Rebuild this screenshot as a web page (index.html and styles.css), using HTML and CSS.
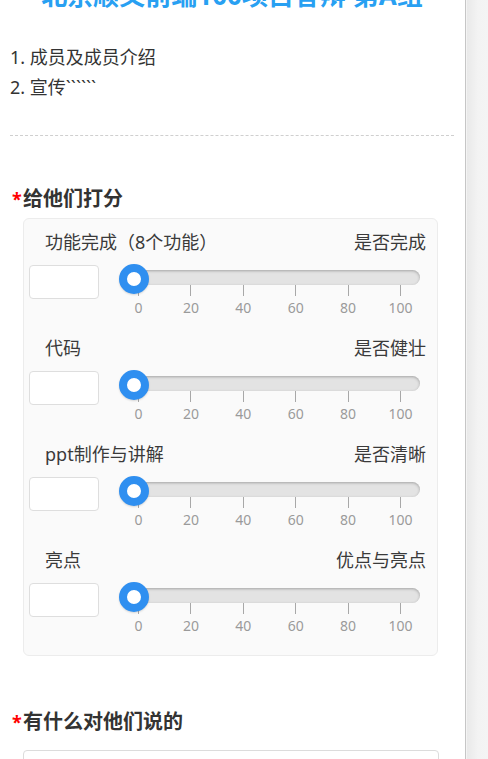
FILE: index.html
```html
<!DOCTYPE html>
<html lang="zh-CN">
<head>
<meta charset="utf-8">
<title>答辩打分</title>
<link rel="stylesheet" href="styles.css">
</head>
<body>
<div class="page">
  <h1 class="title">北京顺义前端100项目答辩 第A组</h1>
  <ol class="intro">
    <li>成员及成员介绍</li>
    <li>宣传``````</li>
  </ol>
  <div class="divider"></div>

  <h2 class="q-title"><span class="req">*</span>给他们打分</h2>
  <div class="rate-box">
    <div class="rate-row">
      <div class="rate-head"><span>功能完成（8个功能）</span><span>是否完成</span></div>
      <div class="rate-ctrl">
        <input class="score" type="text">
        <div class="slider">
          <div class="track"></div>
          <div class="handle"></div>
          <div class="scale">
            <div class="tick"><i></i><span>0</span></div>
            <div class="tick"><i></i><span>20</span></div>
            <div class="tick"><i></i><span>40</span></div>
            <div class="tick"><i></i><span>60</span></div>
            <div class="tick"><i></i><span>80</span></div>
            <div class="tick"><i></i><span>100</span></div>
          </div>
        </div>
      </div>
    </div>
    <div class="rate-row">
      <div class="rate-head"><span>代码</span><span>是否健壮</span></div>
      <div class="rate-ctrl">
        <input class="score" type="text">
        <div class="slider">
          <div class="track"></div>
          <div class="handle"></div>
          <div class="scale">
            <div class="tick"><i></i><span>0</span></div>
            <div class="tick"><i></i><span>20</span></div>
            <div class="tick"><i></i><span>40</span></div>
            <div class="tick"><i></i><span>60</span></div>
            <div class="tick"><i></i><span>80</span></div>
            <div class="tick"><i></i><span>100</span></div>
          </div>
        </div>
      </div>
    </div>
    <div class="rate-row">
      <div class="rate-head"><span>ppt制作与讲解</span><span>是否清晰</span></div>
      <div class="rate-ctrl">
        <input class="score" type="text">
        <div class="slider">
          <div class="track"></div>
          <div class="handle"></div>
          <div class="scale">
            <div class="tick"><i></i><span>0</span></div>
            <div class="tick"><i></i><span>20</span></div>
            <div class="tick"><i></i><span>40</span></div>
            <div class="tick"><i></i><span>60</span></div>
            <div class="tick"><i></i><span>80</span></div>
            <div class="tick"><i></i><span>100</span></div>
          </div>
        </div>
      </div>
    </div>
    <div class="rate-row">
      <div class="rate-head"><span>亮点</span><span>优点与亮点</span></div>
      <div class="rate-ctrl">
        <input class="score" type="text">
        <div class="slider">
          <div class="track"></div>
          <div class="handle"></div>
          <div class="scale">
            <div class="tick"><i></i><span>0</span></div>
            <div class="tick"><i></i><span>20</span></div>
            <div class="tick"><i></i><span>40</span></div>
            <div class="tick"><i></i><span>60</span></div>
            <div class="tick"><i></i><span>80</span></div>
            <div class="tick"><i></i><span>100</span></div>
          </div>
        </div>
      </div>
    </div>
  </div>

  <h2 class="q-title q-second"><span class="req">*</span>有什么对他们说的</h2>
  <textarea class="comment"></textarea>
</div>
</body>
</html>
```
FILE: styles.css
```css
html, body {
  margin: 0;
  padding: 0;
  overflow: hidden;
}
body {
  background: linear-gradient(to right, #ffffff 0, #ffffff 466px, #e9e9e9 467px, #f3f3f3 478px, #f4f4f4 100%);
  font-family: "Noto Sans", "Noto Sans CJK SC", sans-serif;
  color: #333;
}
.page {
  width: 444px;
  padding: 0 11px 40px 10px;
  background: #fff;
  border-right: 1px solid #c6c6c6;
  min-height: 100vh;
}
.title {
  margin: -23px 0 29px;
  font-size: 26px;
  line-height: 36px;
  font-weight: bold;
  color: #28a0f2;
  text-align: center;
}
.intro {
  margin: 0;
  padding: 0;
  list-style: decimal inside;
  font-size: 18px;
  line-height: 30px;
  color: #333;
}
.divider {
  margin-top: 33px;
  border-top: 1px dashed #cfcfcf;
}
.q-title {
  margin: 49px 0 0;
  padding-left: 2px;
  font-size: 20px;
  line-height: 28px;
  font-weight: bold;
  color: #333;
  display: flex;
  align-items: flex-start;
}
.q-second {
  margin-top: 52px;
}
.req {
  display: inline-block;
  width: 11px;
  padding-top: 2px;
  color: #f00;
  font-size: 18px;
  line-height: 24px;
  font-weight: bold;
}
.rate-box {
  margin: 5px 16px 0 13px;
  padding: 11px 11px 1px 5px;
  background: #fafafa;
  border: 1px solid #ececec;
  border-radius: 6px;
}
.rate-row {
  margin-bottom: 20px;
}
.rate-head {
  display: flex;
  justify-content: space-between;
  padding-left: 16px;
  font-size: 18px;
  line-height: 24px;
  color: #3a3a3a;
  margin-bottom: 11px;
}
.rate-ctrl {
  display: flex;
  align-items: flex-start;
}
.score {
  box-sizing: border-box;
  width: 70px;
  height: 34px;
  margin: 0;
  padding: 0 6px;
  background: #fff;
  border: 1px solid #dedede;
  border-radius: 4px;
  outline: none;
}
.slider {
  position: relative;
  width: 300px;
  margin-left: 21px;
  padding-top: 5px;
}
.track {
  height: 15px;
  border-radius: 8px;
  background: #e3e3e3;
  box-shadow: inset 0 1px 3px rgba(0, 0, 0, 0.28);
}
.handle {
  position: absolute;
  left: -1px;
  top: -1px;
  box-sizing: border-box;
  width: 30px;
  height: 30px;
  border-radius: 50%;
  border: 8px solid #2f8ff0;
  background: #fff;
  box-shadow: 0 1px 2px rgba(0, 0, 0, 0.15);
}
.scale {
  display: flex;
  justify-content: space-between;
  margin: 0 19px 0 18px;
}
.tick {
  width: 1px;
  display: flex;
  flex-direction: column;
  align-items: center;
}
.tick i {
  display: block;
  width: 1px;
  height: 11px;
  background: #a8a8a8;
}
.tick span {
  margin-top: 4px;
  font-size: 14px;
  line-height: 16px;
  color: #9a9a9a;
  white-space: nowrap;
}
.comment {
  display: block;
  box-sizing: border-box;
  width: 416px;
  height: 90px;
  margin: 14px 0 0 13px;
  background: #fff;
  border: 1px solid #dcdcdc;
  border-radius: 4px;
  resize: none;
  outline: none;
}
```
